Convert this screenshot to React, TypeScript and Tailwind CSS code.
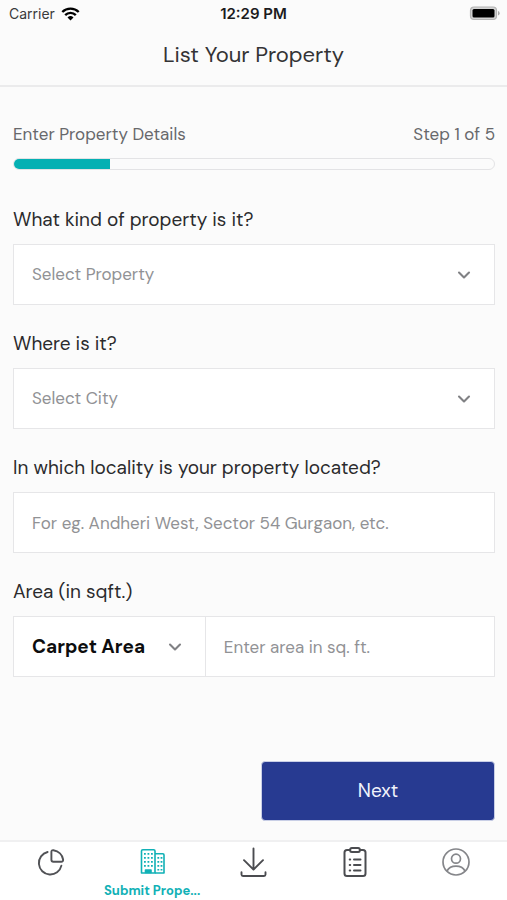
import type { ReactNode } from "react";

function Chevron({ className = "" }: { className?: string }) {
  return (
    <svg
      viewBox="0 0 14 10"
      className={`pointer-events-none absolute top-1/2 h-[10px] w-[14px] -translate-y-1/2 text-[#808184] ${className}`}
      fill="none"
      stroke="currentColor"
      strokeWidth="2.1"
      strokeLinecap="round"
      strokeLinejoin="round"
      aria-hidden="true"
    >
      <path d="M2 2.5 7 7.5l5-5" />
    </svg>
  );
}

function Field({ id, label, children }: { id: string; label: string; children: ReactNode }) {
  return (
    <div className="flex flex-col gap-[10px]">
      <label htmlFor={id} className="text-[19px] leading-[28px] text-[#2b2b2d]">
        {label}
      </label>
      {children}
    </div>
  );
}

function SelectField({ id, label, placeholder, options }: { id: string; label: string; placeholder: string; options: string[] }) {
  return (
    <Field id={id} label={label}>
      <div className="relative">
        <select
          id={id}
          defaultValue=""
          className="h-[61px] w-full appearance-none border border-[#e6e6e8] bg-white pt-px pr-12 pl-[18px] text-[17px] text-[#919295] outline-none"
        >
          <option value="" disabled>
            {placeholder}
          </option>
          {options.map((option) => (
            <option key={option}>{option}</option>
          ))}
        </select>
        <Chevron className="right-6" />
      </div>
    </Field>
  );
}

function PieIcon() {
  return (
    <svg viewBox="0 0 28 28" className="h-7 w-7" fill="none" stroke="currentColor" strokeWidth="1.9" strokeLinecap="round" strokeLinejoin="round">
      <path d="M10.600 4A11.400 11.400 0 1 0 24.400 17.600" />
      <path d="M14.400 3.800c0-1.200.8-1.800 2-1.600 5.200.8 9 4.500 9.700 9.300.2 1.500-.5 2.300-1.900 2.300h-7.800c-1.300 0-2-.7-2-2z" />
    </svg>
  );
}

function BuildingIcon() {
  return (
    <svg viewBox="-1 0.500 28 28" className="h-7 w-7" fill="none" stroke="currentColor" strokeWidth="1.6" strokeLinejoin="round">
      <path d="M2.500 25.500V3.500Q2.500 2.200 3.800 2.200H14.700Q16 2.200 16 3.500V25.500Z" />
      <path d="M16 6.300H23.800Q25 6.300 25 7.500V25.500H16" />
      <path d="M5 6.400H14M5 10.400H14M5 14.400H14M5 18.400H14" strokeWidth="1.600" strokeDasharray="1.800 1.700" />
      <path d="M18.400 10.400H23.600M18.400 14.400H23.600M18.400 18.400H23.600M18.400 22.200H23.600" strokeWidth="1.600" strokeDasharray="1.800 1.400" />
      <path d="M6.500 25V22.500H12V25Z" fill="currentColor" />
    </svg>
  );
}

function DownloadIcon() {
  return (
    <svg viewBox="-0.500 0 28 30" className="h-[30px] w-7" fill="none" stroke="currentColor" strokeWidth="1.900" strokeLinecap="round" strokeLinejoin="round">
      <path d="M14 1.500V22.500M4.500 13.200 14 22.700l9.500-9.500" />
      <path d="M2 25.200V27.500Q2 29 3.500 29H24.500Q26 29 26 27.500V25.200" />
    </svg>
  );
}

function ClipboardIcon() {
  return (
    <svg viewBox="0 0 26 30" className="h-[30px] w-[26px]" fill="none" stroke="currentColor" strokeWidth="2" strokeLinecap="round" strokeLinejoin="round">
      <path d="M8.200 3H5Q2.500 3 2.500 5.500V26.500Q2.500 29 5 29H21Q23.500 29 23.500 26.500V5.500Q23.500 3 21 3H17.800" />
      <path d="M9.800 1H16.200Q17.800 1 17.800 2.500V3.500Q17.800 5 16.200 5H9.800Q8.200 5 8.200 3.500V2.500Q8.200 1 9.800 1Z" />
      <path d="M7.700 12.500h.5M12 12.500h6.500M7.700 18h.5M12 18h6.500M7.700 23.500h.5M12 23.500h6.500" />
    </svg>
  );
}

function ProfileIcon() {
  return (
    <svg viewBox="0 0 28 28" className="h-7 w-7" fill="none" stroke="currentColor" strokeWidth="1.700">
      <circle cx="14" cy="14" r="13" />
      <circle cx="14" cy="10.700" r="4.500" />
      <path d="M5 23C6.800 19.500 10 18.200 14 18.200S21.200 19.500 23 23" />
    </svg>
  );
}

const tabs = [
  { name: "Overview", icon: <PieIcon />, color: "text-[#515256]" },
  { name: "Submit Property", caption: "Submit Prope...", icon: <BuildingIcon />, color: "text-[#11b1b6]" },
  { name: "Downloads", icon: <DownloadIcon />, color: "text-[#4b4c50]" },
  { name: "Tasks", icon: <ClipboardIcon />, color: "text-[#4b4c50]" },
  { name: "Profile", icon: <ProfileIcon />, color: "text-[#85868a]" },
];

function StatusBar() {
  return (
    <div className="grid h-[27px] grid-cols-3 items-center px-[7px] font-['Inter',sans-serif] text-[14px] leading-[20px]">
      <div className="flex items-center gap-[6px] pl-[2px] text-[#3a3a3c]">
        Carrier
        <svg viewBox="0 0 20 15" className="h-[14px] w-[19px] text-black" fill="none" stroke="currentColor" strokeWidth="2.500" aria-hidden="true">
          <path d="M1.200 5.400a12.500 12.500 0 0 1 17.600 0" />
          <path d="M4.300 8.700a8 8 0 0 1 11.400 0" />
          <path d="M10 14.500 6.800 11.200a4.600 4.600 0 0 1 6.400 0z" fill="currentColor" stroke="none" />
        </svg>
      </div>
      <div className="text-center text-[15px] font-semibold whitespace-nowrap text-[#1c1c1e]">12:29 PM</div>
      <svg viewBox="0 0 32 16" className="h-4 w-8 justify-self-end" aria-hidden="true">
        <rect x="2.500" y="1" width="26" height="12.500" rx="3.500" fill="#d4d4d4" stroke="#b4b4b4" strokeWidth="1.200" />
        <rect x="4.500" y="3" width="22" height="8.500" rx="1.500" fill="#000" />
        <path d="M30 5a2.300 2.300 0 0 1 0 4.400z" fill="#aaa" />
      </svg>
    </div>
  );
}

export default function App() {
  return (
    <div className="flex min-h-screen flex-col bg-[#fbfbfb] font-['DM_Sans','Inter',sans-serif]">
      <header className="border-b-2 border-[#ebebec]">
        <StatusBar />
        <h1 className="pt-3 pb-[14px] text-center text-[22px] leading-[32px] text-[#333335]">List Your Property</h1>
      </header>

      <main className="flex flex-1 flex-col pt-[35px] pr-3 pl-[13px]">
        <div className="flex items-center justify-between text-[17px] leading-[24px] text-[#67686b]">
          <h2>Enter Property Details</h2>
          <span>Step 1 of 5</span>
        </div>
        <div
          role="progressbar"
          aria-label="Form progress"
          aria-valuemin={0}
          aria-valuemax={5}
          aria-valuenow={1}
          className="mt-3 h-3 overflow-hidden rounded-full border border-[#e3e3e5]"
        >
          <div className="h-full w-1/5 bg-[#05b0b3]" />
        </div>

        <form className="mt-9 flex flex-1 flex-col gap-[25px]" onSubmit={(event) => event.preventDefault()}>
          <SelectField id="kind" label="What kind of property is it?" placeholder="Select Property" options={["Apartment", "House", "Office"]} />
          <SelectField id="city" label="Where is it?" placeholder="Select City" options={["Mumbai", "Gurgaon", "Delhi"]} />
          <Field id="locality" label="In which locality is your property located?">
            <input
              id="locality"
              type="text"
              placeholder="For eg. Andheri West, Sector 54 Gurgaon, etc."
              className="h-[61px] w-full border border-[#e6e6e8] bg-white px-[18px] text-[17px] outline-none placeholder:text-[#919295]"
            />
          </Field>
          <Field id="area" label="Area (in sqft.)">
            <div className="flex">
              <div className="relative w-2/5">
                <select
                  aria-label="Area type"
                  className="h-[61px] w-full appearance-none border border-[#e6e6e8] bg-white pt-px pl-[18px] text-[19px] font-bold text-[#0d0d0e] outline-none"
                >
                  <option>Carpet Area</option>
                  <option>Built-up Area</option>
                </select>
                <Chevron className="right-6" />
              </div>
              <input
                id="area"
                type="text"
                inputMode="numeric"
                placeholder="Enter area in sq. ft."
                className="h-[61px] min-w-0 flex-1 border border-l-0 border-[#e6e6e8] bg-white px-[18px] text-[17px] outline-none placeholder:text-[#919295]"
              />
            </div>
          </Field>
          <button type="submit" className="mt-auto mb-[19px] ml-auto h-[60px] w-[234px] rounded-[4px] border border-[#c9cfe6] bg-[#273a91] text-[19px] text-[#f1f3fb]">
            Next
          </button>
        </form>
      </main>

      <nav aria-label="Main" className="grid h-[60px] grid-cols-5 border-t-2 border-[#f0f0f1] bg-white">
        {tabs.map((tab) => (
          <a key={tab.name} href="#" aria-label={tab.name} className={`flex flex-col items-center pt-[5px] ${tab.color}`}>
            <span className="flex h-[30px] items-center">{tab.icon}</span>
            {tab.caption && <span className="mt-1 text-[13px] leading-[20px] font-bold whitespace-nowrap">{tab.caption}</span>}
          </a>
        ))}
      </nav>
    </div>
  );
}
